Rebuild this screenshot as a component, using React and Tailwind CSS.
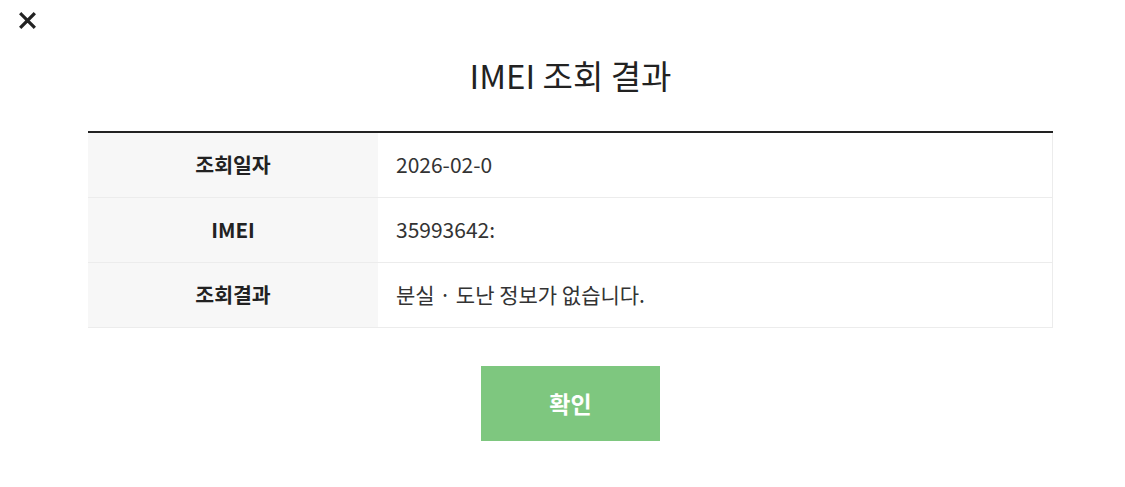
const rows = [
  { label: '조회일자', value: '2026-02-0' },
  { label: 'IMEI', value: '35993642:' },
  { label: '조회결과', value: '분실 · 도난 정보가 없습니다.' },
]

const App = () => {
  return (
    <div className="relative h-[487px] w-[1125px] overflow-hidden bg-white text-[#222] [font-family:'Noto_Sans_CJK_KR','Noto_Sans',sans-serif]">
      <button className="absolute left-[18px] top-[11px] text-[#222]" aria-label="닫기">
        <svg width="19" height="19" viewBox="0 0 20 20" fill="none" stroke="currentColor" strokeWidth="3.4" strokeLinecap="square">
          <path d="M3.5 3.5L16.5 16.5M16.5 3.5L3.5 16.5" />
        </svg>
      </button>
      <div className="ml-[88px] w-[965px] pt-[52px]">
        <h1 className="text-center text-[33px] font-normal leading-[46px] text-[#222]">IMEI 조회 결과</h1>
        <table className="mt-[33px] w-full border-collapse border-t-2 border-[#222]">
          <tbody>
            {rows.map((row) => (
              <tr key={row.label} className="h-[65px] border-b border-r border-[#ececec]">
                <th className="w-[290px] bg-[#f7f7f7] text-center text-[20.5px] font-bold">{row.label}</th>
                <td className="px-[18px] text-[21px] text-[#333]">{row.value}</td>
              </tr>
            ))}
          </tbody>
        </table>
        <div className="mt-[38px] flex justify-center">
          <button className="h-[75px] w-[179px] bg-[#7ec77f] text-[23px] font-bold text-white">확인</button>
        </div>
      </div>
    </div>
  )
}

export default App
